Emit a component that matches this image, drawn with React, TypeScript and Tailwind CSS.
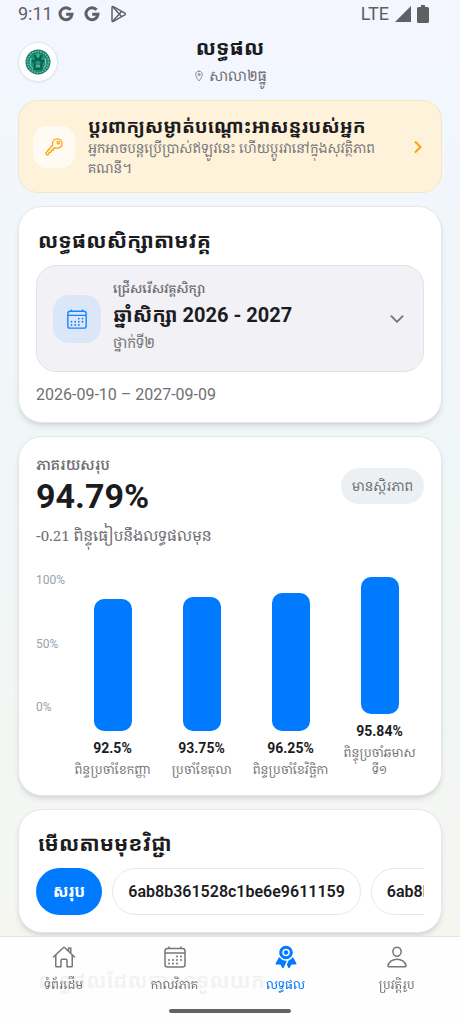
import React from 'react';
import {
  IoChevronDown,
  IoChevronForward,
  IoHomeOutline,
  IoKeyOutline,
  IoLocationOutline,
  IoPersonOutline,
  IoRibbon,
} from 'react-icons/io5';

const results = [
  { value: 92.5, label: 'ពិន្ទុប្រចាំខែកញ្ញា' },
  { value: 93.75, label: 'ប្រចាំខែតុលា' },
  { value: 96.25, label: 'ពិន្ទុប្រចាំខែវិច្ឆិកា' },
  { value: 95.84, label: 'ពិន្ទុប្រចាំឆមាស ទី១' },
];

const subjects = ['6ab8b361528c1be6e9611159', '6ab8b361528c1be6e961115a'];

const tabs = [
  { label: 'ទំព័រដើម', Icon: IoHomeOutline },
  { label: 'កាលវិភាគ', Icon: CalendarDots },
  { label: 'លទ្ធផល', Icon: IoRibbon, active: true },
  { label: 'ប្រវត្តិរូប', Icon: IoPersonOutline },
];

// lighter Khmer face used for all secondary text
const light = "font-['Noto_Serif_Khmer','Noto_Sans_Khmer',Roboto,serif]";

function CalendarDots({ className }: { className?: string }) {
  return (
    <svg viewBox="0 0 24 24" className={className} fill="none" stroke="currentColor" strokeWidth="1.5">
      <rect x="2" y="3.5" width="20" height="18.5" rx="2.5" />
      <path d="M2 8h20M6 1.5v2M18 1.5v2" />
      <path
        d="M14 11.5h.01M18 11.5h.01M6 15h.01M10 15h.01M14 15h.01M18 15h.01M6 18.5h.01M10 18.5h.01M14 18.5h.01"
        strokeWidth="2"
        strokeLinecap="round"
      />
    </svg>
  );
}

function GoogleIcon() {
  return (
    <svg viewBox="0 0 16 16" className="size-4" fill="none" stroke="currentColor" strokeWidth="3">
      <path d="M12.6 3.8A6 6 0 1 0 14 8.2H8.2" />
    </svg>
  );
}

function PlayIcon() {
  return (
    <svg viewBox="0 0 17 18" className="h-[18px] w-[17px]" fill="none" stroke="currentColor" strokeWidth="1.5" strokeLinejoin="round">
      <path d="M2 2.500Q2 1 3.400 1.700L14.800 8.200Q15.800 9 14.800 9.800L3.400 16.300Q2 17 2 15.500z" />
      <path d="M3 2L11.500 11.600M3 16L11.500 6.400" />
    </svg>
  );
}

function SchoolLogo() {
  return (
    <svg viewBox="0 0 26 26" className="size-[26px]">
      <circle cx="13" cy="13" r="12.5" fill="#14806a" />
      <circle cx="13" cy="13" r="10.5" fill="none" stroke="#7cc3b3" strokeWidth="1.5" strokeDasharray="1.5 1.2" />
      <circle cx="13" cy="13" r="9" fill="#1d937a" />
      <path d="M9 6l2 3-1 3 3-2 3 2-1-3 2-3M7 11l3 4-1 5M19 11l-3 4 1 5M10 20h6" fill="none" stroke="#075c4a" strokeWidth="1.8" />
      <path d="M6 9l-1 7 3 4M20 9l1 7-3 4M13 5v3M11 17h4" fill="none" stroke="#a5d8cc" strokeWidth="0.8" />
    </svg>
  );
}

function StatusBar() {
  return (
    <div className="flex h-7 shrink-0 items-center justify-between pr-[31px] pl-[18px] text-[#5f6064]">
      <div className="flex items-center">
        <span className="w-[34px] text-lg leading-7">9:11</span>
        <div className="ml-1.5 flex items-center gap-2.5">
          <GoogleIcon />
          <GoogleIcon />
          <PlayIcon />
        </div>
      </div>
      <div className="flex items-center gap-1.5">
        <span className="text-lg leading-7">LTE</span>
        <svg viewBox="0 0 16 16" className="size-4" fill="currentColor">
          <path d="M16 0v16H0z" />
        </svg>
        <svg viewBox="0 0 12 18" className="h-[18px] w-3" fill="currentColor">
          <path d="M4 0h4v2h2.500a1.500 1.500 0 0 1 1.500 1.500v13a1.500 1.500 0 0 1-1.500 1.500h-9A1.500 1.500 0 0 1 0 16.500v-13A1.500 1.500 0 0 1 1.500 2H4z" />
        </svg>
      </div>
    </div>
  );
}

function Card({ className, children }: { className: string; children: React.ReactNode }) {
  return (
    <section className={`rounded-3xl border border-gray-200 bg-white px-[17px] shadow-md ${className}`}>
      {children}
    </section>
  );
}

function ResultChart() {
  return (
    <div className="mt-[23px] flex items-start">
      <div className="flex h-[143px] w-8 shrink-0 flex-col justify-between text-xs leading-4 text-gray-400">
        <span>100%</span>
        <span>50%</span>
        <span>0%</span>
      </div>
      <div className="flex h-[206px] flex-1 items-end">
        {results.map((item) => (
          <div key={item.value} className="flex flex-1 flex-col items-center">
            <div className="flex h-[143px] items-end">
              <div className="w-[38px] rounded-[10px] bg-[#007aff]" style={{ height: `${item.value}%` }} />
            </div>
            <div className="mt-2 text-sm leading-[18px] font-bold">{item.value}%</div>
            <div className={`mt-1 w-[82px] overflow-hidden text-center text-xs leading-[17px] text-[#77777b] ${light}`}>
              {item.label}
            </div>
          </div>
        ))}
      </div>
    </div>
  );
}

function App() {
  return (
    <div className="flex h-screen flex-col overflow-hidden bg-linear-to-b from-[#f3f6ff] via-[#f0f7f7] to-[#f6f6ef] font-[Roboto,'Noto_Sans_Khmer','Noto_Serif_Khmer','Khmer_OS',sans-serif] text-[#1c1c1e]">
      <StatusBar />

      <header className="grid h-[72px] shrink-0 grid-cols-[40px_1fr_40px] px-[18px] pt-3.5">
        <div className="flex size-10 items-center justify-center rounded-full border border-[#d8ebea] bg-white shadow-xs">
          <SchoolLogo />
        </div>
        <div className="-mt-2 text-center">
          <h1 className="text-[21px] leading-7 font-bold">លទ្ធផល</h1>
          <p className={`flex items-center justify-center gap-1 text-sm leading-7 text-[#6f7074] ${light}`}>
            <IoLocationOutline className="size-3" />
            សាលា២ធ្នូ
          </p>
        </div>
      </header>

      <main className="flex-1 overflow-y-auto px-[18px] [scrollbar-width:none]">
        <button className="flex h-[93px] w-full items-center rounded-[20px] border border-[#f3e5c8] bg-[#fef2da] px-3.5 text-left">
          <span className="flex size-[42px] shrink-0 items-center justify-center rounded-[14px] bg-[#fffbf3] text-[#ff9f0a]">
            <IoKeyOutline className="size-5" />
          </span>
          <span className="ml-[13px] flex-1">
            <span className="block overflow-hidden text-[19px] leading-[22px] font-bold">
              ប្តូរពាក្យសម្ងាត់បណ្តោះអាសន្នរបស់អ្នក
            </span>
            <span className={`block text-[13px] leading-5 text-[#77777b] ${light}`}>
              អ្នកអាចបន្តប្រើប្រាស់ឥឡូវនេះ ហើយប្តូរវានៅក្នុងសុវត្ថិភាព គណនី។
            </span>
          </span>
          <IoChevronForward className="size-[18px] shrink-0 text-[#ff9f0a] [&_path]:stroke-[56px]" />
        </button>

        <Card className="mt-[13px] pt-4 pb-[15px]">
          <h2 className="px-0.5 text-[21px] leading-9 font-bold">លទ្ធផលសិក្សាតាមវគ្គ</h2>
          <button
            aria-haspopup="listbox"
            className="mt-1.5 flex h-[107px] w-full items-center rounded-[20px] border border-[#e2e2e6] bg-[#f2f1f6] px-4 text-left"
          >
            <span className="flex size-12 shrink-0 items-center justify-center rounded-2xl bg-[#dbe6f8] text-[#1683ff]">
              <CalendarDots className="size-[22px]" />
            </span>
            <span className="ml-3 flex-1 pb-1">
              <span className={`block text-xs leading-6 font-semibold text-[#6f7074] ${light}`}>ជ្រើសរើសវគ្គសិក្សា</span>
              <span className="block text-xl leading-7 font-bold">ឆ្នាំសិក្សា 2026 - 2027</span>
              <span className={`block text-sm leading-7 text-[#77777b] ${light}`}>ថ្នាក់ទី២</span>
            </span>
            <IoChevronDown className="size-5 text-[#77777b]" />
          </button>
          <p className="mt-[11px] text-base leading-6 text-[#6f7074]">2026-09-10 – 2027-09-09</p>
        </Card>

        <Card className="mt-[13px] pt-[18px] pb-[17px]">
          <div className="flex items-center justify-between">
            <div>
              <div className={`text-sm leading-5 font-semibold text-[#6f7074] ${light}`}>ភាគរយសរុប</div>
              <div className="text-[34px] leading-[42px] font-bold">94.79%</div>
            </div>
            <span className={`rounded-full bg-[#edf0f3] px-[11px] py-2 text-[13px] leading-5 text-[#6f7074] ${light}`}>
              មានស្ថិរភាព
            </span>
          </div>
          <p className={`mt-1 text-[15px] leading-7 text-[#6f7074] ${light}`}>-0.21 ពិន្ទុធៀបនឹងលទ្ធផលមុន</p>
          <ResultChart />
        </Card>

        <Card className="mt-[13px] pt-4 pb-[17px]">
          <h2 className="px-0.5 text-[21px] leading-9 font-bold">មើលតាមមុខវិជ្ជា</h2>
          <div className="mt-1.5 flex gap-2.5 overflow-x-auto [scrollbar-width:none]">
            <button className="h-[47px] shrink-0 rounded-full bg-[#007aff] px-[17px] text-base font-bold text-white">
              សរុប
            </button>
            {subjects.map((id) => (
              <button key={id} className="h-[47px] shrink-0 rounded-full border border-gray-200 bg-white px-[15px] text-base font-semibold">
                {id}
              </button>
            ))}
          </div>
        </Card>

        <Card className="mt-[13px] min-h-60 pt-4">
          <h2 className="px-0.5 text-[21px] leading-9 font-bold">លទ្ធផលដែលបានទទួលយក</h2>
        </Card>
      </main>

      <nav className="fixed inset-x-0 bottom-0 border-t border-[#e3e6e5] bg-[#fefefe]/95">
        <div className="flex px-2 pt-2">
          {tabs.map(({ label, Icon, active }) => (
            <a
              key={label}
              href="#"
              className={`flex flex-1 flex-col items-center gap-1 ${active ? 'text-[#007aff]' : 'text-[#77777b]'}`}
            >
              <Icon className="size-6" />
              <span className={`text-xs leading-6 ${light}`}>{label}</span>
            </a>
          ))}
        </div>
        <div className="mx-auto mt-3 mb-[11px] h-1 w-[122px] rounded-full bg-[#636366]" />
      </nav>
    </div>
  );
}

export default App;
